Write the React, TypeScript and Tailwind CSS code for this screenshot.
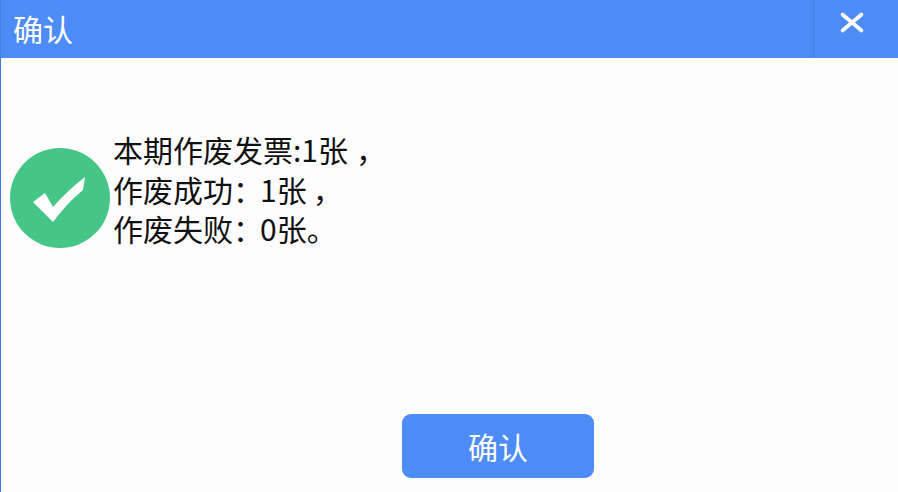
export default function App() {
  const font = { fontFamily: '"Noto Sans CJK SC", sans-serif' };
  return (
    <div className="w-[898px] h-[492px] flex flex-col bg-[#fdfdfe] overflow-hidden border-l border-l-[#3f7fd8]" style={font}>
      <div className="h-[58px] shrink-0 bg-[#4d8cf7] flex items-stretch">
        <div className="flex-1 pl-[12px] pt-[6px] text-[30px] leading-[44px] text-white">确认</div>
        <div className="w-[85px] border-l border-l-[#4580e3] flex items-start justify-center pt-[11px] pr-[9px]">
          <svg width="26" height="24" viewBox="0 0 26 24">
            <path d="M3.5 3.5 L22.5 19.5 M22.5 3.5 L3.5 19.5" stroke="#fff" strokeWidth="3.6" strokeLinecap="round" />
          </svg>
        </div>
      </div>
      <div className="flex items-start pl-[9px] pt-[72px]">
        <svg width="100" height="100" viewBox="0 0 100 100" className="shrink-0 mt-[18px]">
          <circle cx="50" cy="50" r="50" fill="#46c686" />
          <path d="M23 54 L35 45 L43 59 Q58 42 75 29 L73 42 Q58 54 43 74 Z" fill="#fff" />
        </svg>
        <div className="ml-[3px] text-[30px] leading-[39.5px] text-[#111] whitespace-pre">
          <div>本期作废发票:1张<span className="ml-[8px]">，</span></div>
          <div>作废成功<span className="tracking-[-3px]">：</span>1张<span className="ml-[6px]">，</span></div>
          <div>作废失败<span className="tracking-[-3px]">：</span>0张。</div>
        </div>
      </div>
      <div className="flex-1 flex items-start pt-[165px] pl-[401px]">
        <button className="w-[192px] h-[64px] rounded-[9px] bg-[#4d8cf7] text-white text-[30px] leading-[44px]">确认</button>
      </div>
    </div>
  );
}
